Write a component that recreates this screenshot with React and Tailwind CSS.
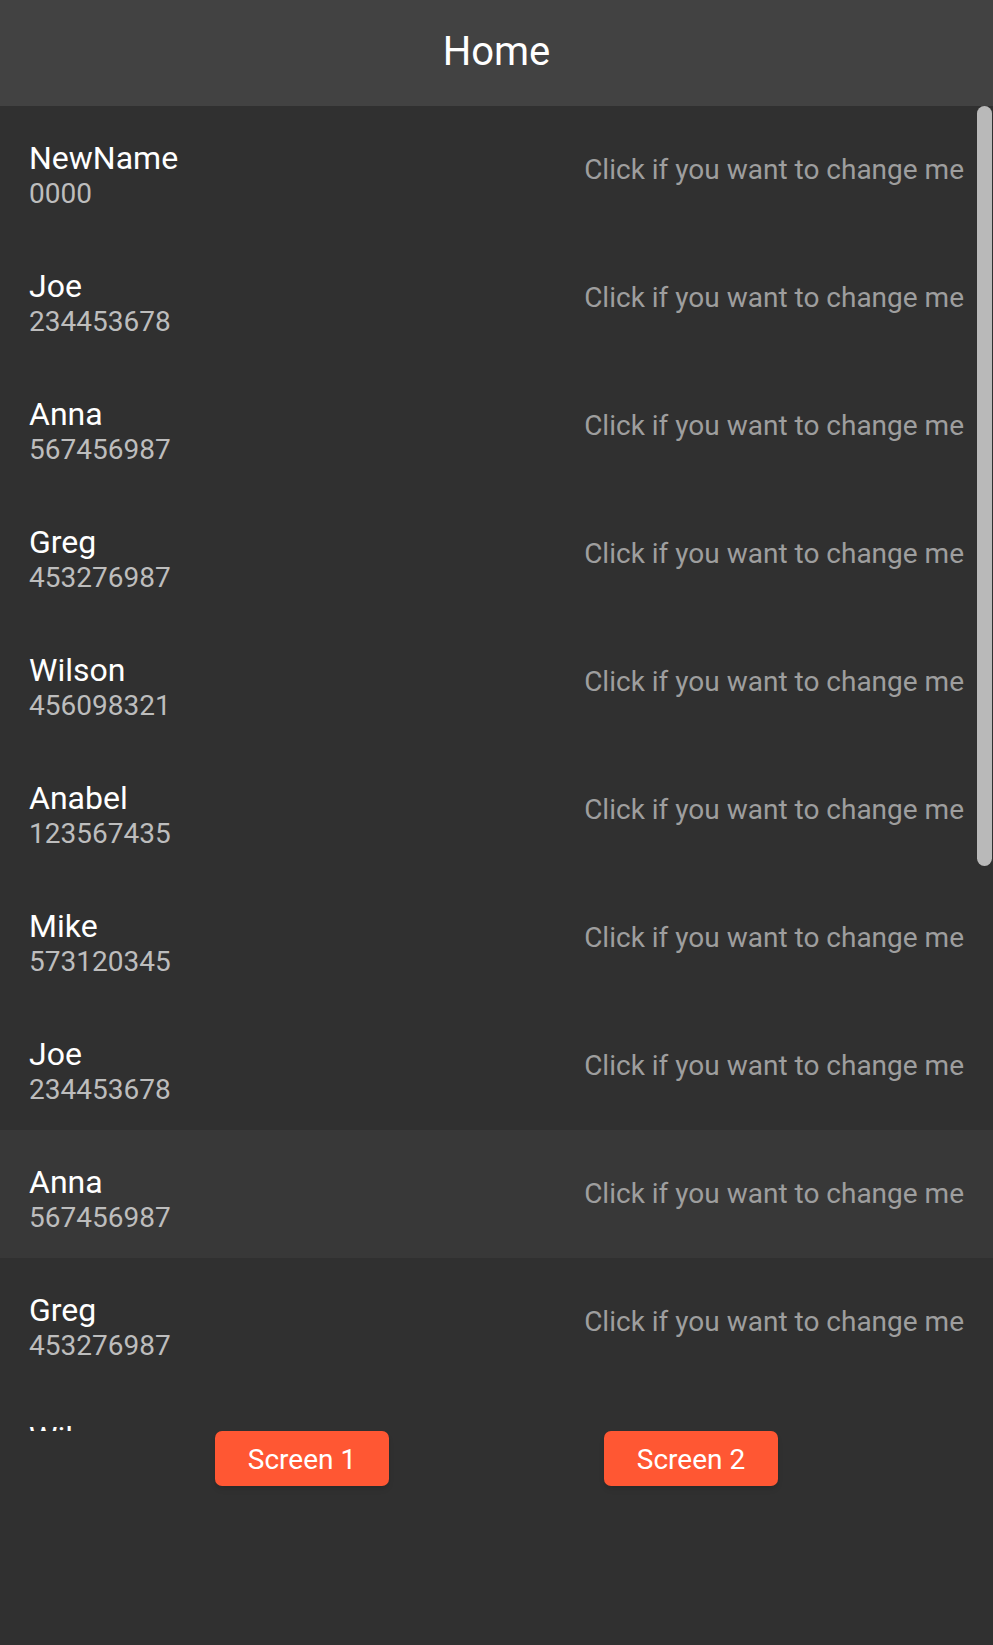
const contacts = [
  { name: 'NewName', phone: '0000' },
  { name: 'Joe', phone: '234453678' },
  { name: 'Anna', phone: '567456987' },
  { name: 'Greg', phone: '453276987' },
  { name: 'Wilson', phone: '456098321' },
  { name: 'Anabel', phone: '123567435' },
  { name: 'Mike', phone: '573120345' },
  { name: 'Joe', phone: '234453678' },
  { name: 'Anna', phone: '567456987' },
  { name: 'Greg', phone: '453276987' },
  { name: 'Wilson', phone: '456098321' },
  { name: 'Anabel', phone: '123567435' },
];

function ContactRow({ contact, active }) {
  return (
    <div
      className={`flex h-[128px] items-center justify-between px-[29px] ${
        active ? 'bg-[#383838]' : 'bg-[#303030]'
      }`}
    >
      <div className="flex flex-col">
        <span className="text-[32px] leading-[46px] text-white">{contact.name}</span>
        <span className="text-[28px] leading-[25px] text-[#bdbdbd]">{contact.phone}</span>
      </div>
      <span className="text-[28px] leading-[34px] text-[#9e9e9e]">Click if you want to change me</span>
    </div>
  );
}

export default function App() {
  return (
    <div
      className="flex h-[1645px] w-full flex-col bg-[#303030]"
      style={{ fontFamily: 'Roboto, "Noto Sans", sans-serif' }}
    >
      <header className="flex h-[106px] shrink-0 items-center justify-center bg-[#424242] pb-[2px] shadow-md">
        <h1 className="text-[40px] leading-[46px] text-white">Home</h1>
      </header>

      <div className="relative h-[1325px] shrink-0 overflow-hidden">
        {contacts.map((c, i) => (
          <ContactRow key={i} contact={c} active={i === 8} />
        ))}
        {/* scroll thumb */}
        <div className="absolute right-[1px] top-0 h-[760px] w-[15px] rounded-full bg-[#b9b9b9]" />
      </div>

      <div className="flex justify-evenly">
        <button className="h-[55px] w-[174px] rounded-[7px] bg-[#ff5733] pt-[3px] text-[28px] leading-[34px] text-white shadow-md">
          Screen 1
        </button>
        <button className="h-[55px] w-[174px] rounded-[7px] bg-[#ff5733] pt-[3px] text-[28px] leading-[34px] text-white shadow-md">
          Screen 2
        </button>
      </div>
    </div>
  );
}
